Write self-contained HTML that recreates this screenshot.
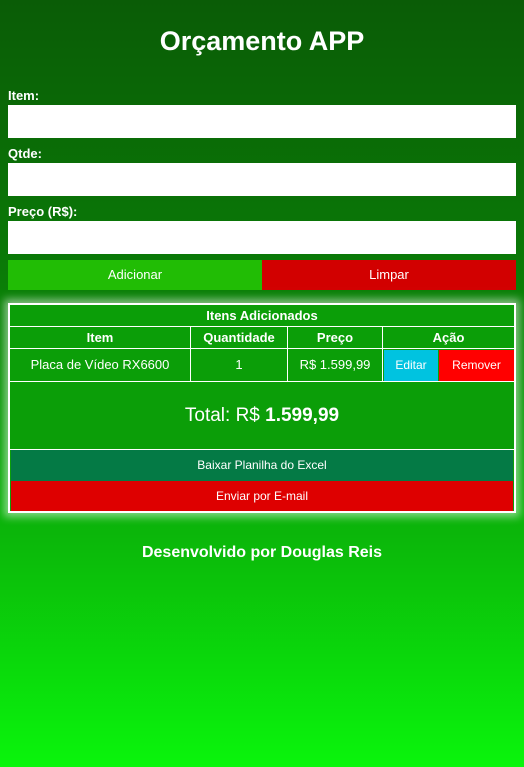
<!DOCTYPE html>
<html><head><meta charset="utf-8"><style>
*{margin:0;padding:0;box-sizing:border-box}
body{width:524px;height:767px;overflow:hidden;background:linear-gradient(#0a5c06 0%,#0a7a07 35%,#0bb70a 70%,#0af50c 100%);font-family:"Liberation Sans",sans-serif;color:#fff;position:relative}
.a{position:absolute}
h1{position:absolute;top:26px;left:0;width:524px;text-align:center;font-size:27px;font-weight:bold}
.lab{left:8px;font-size:13px;font-weight:bold}
.inp{left:8px;width:508px;height:33px;background:#fff}
.btn{top:260px;height:30px;font-size:13px;text-align:center;line-height:30px}
.box{left:8px;top:303px;width:508px;height:210px;border:2px solid #fff;background:#0b9e08;box-shadow:0 0 8px 4px rgba(255,255,255,.5)}
.c{position:absolute;text-align:center;font-size:13px;border-right:1px solid #fff;border-bottom:1px solid #fff}
</style></head><body>
<h1>Orçamento APP</h1>
<div class="a lab" style="top:88px">Item:</div>
<div class="a inp" style="top:105px"></div>
<div class="a lab" style="top:146px">Qtde:</div>
<div class="a inp" style="top:163px"></div>
<div class="a lab" style="top:204px">Preço (R$):</div>
<div class="a inp" style="top:221px"></div>
<div class="a btn" style="left:8px;width:254px;background:#21bd05">Adicionar</div>
<div class="a btn" style="left:262px;width:254px;background:#d20000">Limpar</div>
<div class="a box">
 <div class="c" style="left:0;top:0;width:504px;height:22px;line-height:21px;font-weight:bold;border-right:none">Itens Adicionados</div>
 <div class="c" style="left:0;top:22px;width:181px;height:22px;line-height:21px;font-weight:bold">Item</div>
 <div class="c" style="left:181px;top:22px;width:97px;height:22px;line-height:21px;font-weight:bold">Quantidade</div>
 <div class="c" style="left:278px;top:22px;width:95px;height:22px;line-height:21px;font-weight:bold">Preço</div>
 <div class="c" style="left:373px;top:22px;width:131px;height:22px;line-height:21px;font-weight:bold;border-right:none">Ação</div>
 <div class="c" style="left:0;top:44px;width:181px;height:33px;line-height:32px">Placa de Vídeo RX6600</div>
 <div class="c" style="left:181px;top:44px;width:97px;height:33px;line-height:32px">1</div>
 <div class="c" style="left:278px;top:44px;width:95px;height:33px;line-height:32px">R$ 1.599,99</div>
 <div class="c" style="left:373px;top:44px;width:131px;height:33px;border-right:none"></div>
 <div class="a" style="left:374px;top:45px;width:54px;height:31px;background:#00c3e0;font-size:12px;text-align:center;line-height:31px">Editar</div>
 <div class="a" style="left:429px;top:45px;width:75px;height:31px;background:#f00;font-size:12px;text-align:center;line-height:31px">Remover</div>
 <div class="c" style="left:0;top:77px;width:504px;height:68px;line-height:67px;font-size:19px;border-right:none">Total: R$ <b>1.599,99</b></div>
 <div class="a" style="left:1px;top:145px;width:502px;height:31px;background:#047a45;font-size:12px;text-align:center;line-height:31px">Baixar Planilha do Excel</div>
 <div class="a" style="left:1px;top:176px;width:502px;height:30px;background:#de0000;font-size:12px;text-align:center;line-height:30px">Enviar por E-mail</div>
</div>
<div class="a" style="top:544px;left:0;width:524px;text-align:center;font-size:16px;font-weight:bold">Desenvolvido por Douglas Reis</div>
</body></html>
